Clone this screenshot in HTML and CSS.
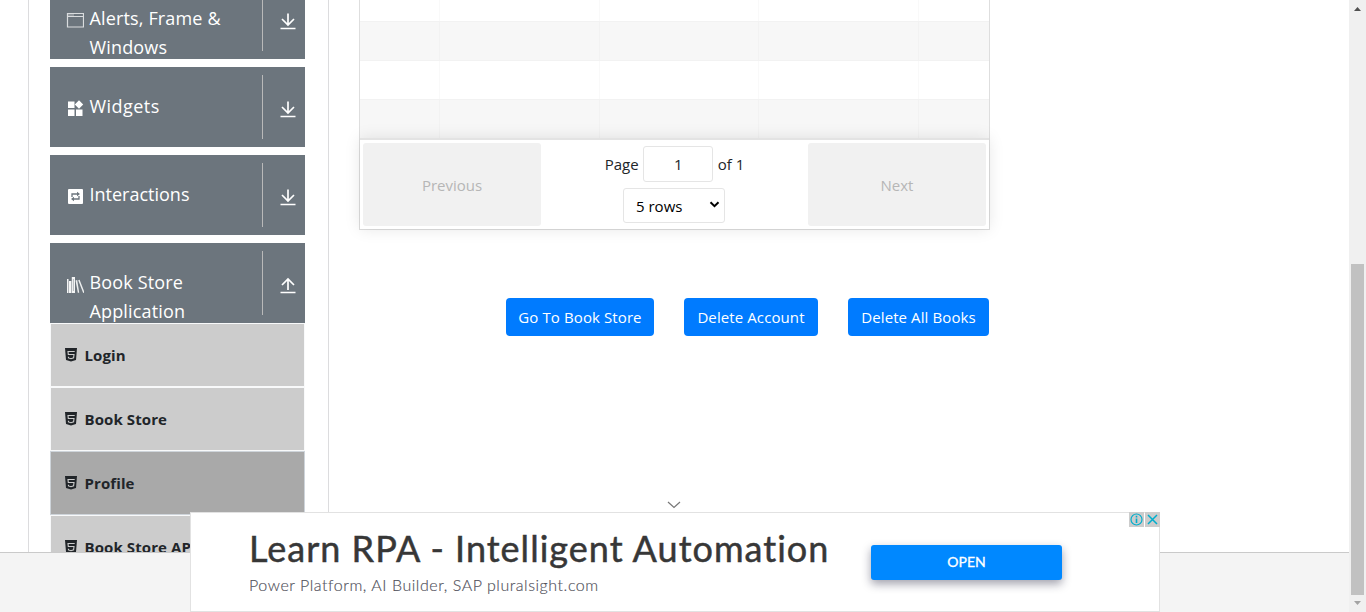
FILE: index.html
```html
<!DOCTYPE html>
<html lang="en">
<head>
<meta charset="utf-8">
<title>Profile</title>
<link rel="stylesheet" href="styles.css">
</head>
<body>
<svg class="defs" aria-hidden="true">
  <symbol id="down" viewBox="0 0 16 18"><path d="M8 1.500v11M2 7l6 6 6-6M.5 16.500h15" fill="none" stroke="#fff" stroke-width="1.700"/></symbol>
  <symbol id="up" viewBox="0 0 16 18"><path d="M8 14V3M2 9l6-6 6 6M.5 16.500h15" fill="none" stroke="#fff" stroke-width="1.700"/></symbol>
  <symbol id="html5" viewBox="0 0 12 14"><path d="M0 0h12l-1 12-5 1.500L1 12z" fill="#212529"/><path d="M9.700 3.500H3l.3 3h5.700l-.4 3.400-2.600.8-2.500-.8-.1-1.200" fill="none" stroke="#ccc" stroke-width="1.100"/></symbol>
</svg>
<div class="window">
  <div class="page">
    <main class="main">
      <aside class="sidebar">
        <div class="group">
          <svg class="group-icon" viewBox="0 0 18 18"><path d="M1.500 2.500h16v13.500h-16zM1.500 5.500h16" fill="none" stroke="#d9dcde" stroke-width="1.200"/><path d="M2.500 4h1m1 0h1m1 0h1" stroke="#fff"/></svg>
          <span class="group-name">Alerts, Frame &amp; Windows</span>
          <span class="toggle"><svg class="arrow"><use href="#down"/></svg></span>
        </div>
        <div class="group">
          <svg class="group-icon" viewBox="0 0 18 18"><path d="M2 2.500h6.500V9H2zM2 10.500h6.500V17H2zM10 10.500h6.500V17H10zM13 1.300l4.200 4.200L13 9.700 8.800 5.500z" fill="#fff"/></svg>
          <span class="group-name widgets">Widgets</span>
          <span class="toggle"><svg class="arrow"><use href="#down"/></svg></span>
        </div>
        <div class="group">
          <svg class="group-icon" viewBox="0 0 18 18"><rect x="2" y="2" width="15" height="15" rx="1" fill="#fff"/><path d="M6 10V7h6M13 9v3H7" fill="none" stroke="#6c757d" stroke-width="1.300"/><path d="M11 4.800l3 2.200-3 2.200zM8 9.800l-3 2.200 3 2.200z" fill="#6c757d"/></svg>
          <span class="group-name inter">Interactions</span>
          <span class="toggle"><svg class="arrow"><use href="#down"/></svg></span>
        </div>
        <div class="group">
          <svg class="group-icon" viewBox="0 0 18 18"><path d="M1 4h1.500v14H1zM3 6h2.300v12H3zM5.800 2H9v16H5.800z" fill="#f4f5f5"/><path d="M7.400 4v12" stroke="#9ba1a6" stroke-width=".7"/><path d="M9.500 5.500l1.700-.4 2 12.400-1.300.5zM12.200 5.300l1.400-.5 5 12.700-1.400.5z" fill="#eceeee"/></svg>
          <span class="group-name">Book Store Application</span>
          <span class="toggle"><svg class="arrow"><use href="#up"/></svg></span>
        </div>
        <ul class="menu">
          <li class="item"><svg class="item-icon"><use href="#html5"/></svg><span>Login</span></li>
          <li class="item"><svg class="item-icon"><use href="#html5"/></svg><span>Book Store</span></li>
          <li class="item active"><svg class="item-icon"><use href="#html5"/></svg><span>Profile</span></li>
          <li class="item"><svg class="item-icon"><use href="#html5"/></svg><span>Book Store API</span></li>
        </ul>
      </aside>
      <section class="content">
        <div class="table">
          <div class="row first"><i></i><i></i><i></i><i></i><i></i></div>
          <div class="row odd"><i></i><i></i><i></i><i></i><i></i></div>
          <div class="row even"><i></i><i></i><i></i><i></i><i></i></div>
          <div class="row last"><i></i><i></i><i></i><i></i><i></i></div>
          <div class="pagination">
            <div class="pager">Previous</div>
            <div class="pages">
              <div class="page-line"><span>Page</span><span class="page-number">1</span><span>of 1</span></div>
              <div class="select"><span>5 rows</span><svg class="caret" viewBox="0 0 10 7"><path d="M1 1.200l4 4 4-4" fill="none" stroke="#000" stroke-width="2"/></svg></div>
            </div>
            <div class="pager">Next</div>
          </div>
        </div>
        <div class="buttons">
          <div class="button b1">Go To Book Store</div>
          <div class="button b2">Delete Account</div>
          <div class="button b3">Delete All Books</div>
        </div>
      </section>
    </main>
    <footer class="footer"></footer>
  </div>
  <div class="scrollbar">
    <svg class="scroll-arrow" viewBox="0 0 7 4"><path d="M0 4l3.500-4L7 4z" fill="#505050"/></svg>
    <div class="thumb"></div>
    <svg class="scroll-arrow" viewBox="0 0 7 4"><path d="M0 0h7L3.500 4z" fill="#a3a3a3"/></svg>
  </div>
</div>
<svg class="collapse" viewBox="0 0 14 8"><path d="M1 1l6 5.500L13 1" fill="none" stroke="#777" stroke-width="1.200"/></svg>
<div class="ad">
  <div class="ad-text">
    <div class="ad-title">Learn RPA - Intelligent Automation</div>
    <div class="ad-sub">Power Platform, AI Builder, SAP pluralsight.com</div>
  </div>
  <div class="ad-open">OPEN</div>
  <div class="ad-badges">
    <svg class="badge" viewBox="0 0 15 15"><circle cx="7.500" cy="7.500" r="5.500" fill="none" stroke="#00aecd" stroke-width="1.200"/><path d="M7.500 6.500v4.500M7.500 3.800v1.600" stroke="#00aecd" stroke-width="1.600"/></svg>
    <svg class="badge" viewBox="0 0 15 15"><path d="M3 3l9 9M12 3l-9 9" stroke="#00aecd" stroke-width="1.500"/></svg>
  </div>
</div>
</body>
</html>
```
FILE: styles.css
```css
* { box-sizing: border-box; }
body { margin: 0; height: 612px; overflow: hidden; position: relative; background: #fff; color: #212529; font: 16px/24px "Open Sans", "Noto Sans", sans-serif; }
.defs { position: absolute; width: 0; height: 0; }
.window { display: flex; height: 612px; }
.page { width: 1349px; display: flex; flex-direction: column; }
.main { height: 552px; overflow: hidden; display: flex; padding-left: 28px; }
.footer { height: 60px; background: #f4f4f4; border-top: 1px solid #cacaca; }
.sidebar { width: 301px; height: 600px; flex: none; border: solid #dcdcde; border-width: 0 1px; padding: 0 23px 0 21px; margin-top: -21px; }
.group { height: 80px; margin-bottom: 8px; background: #6c757d; color: #fff; display: flex; overflow: hidden; }
.group:nth-child(4) { margin-bottom: 0; }
.group-icon { width: 18px; height: 18px; margin: 32px 0 0 16px; flex: none; }
.group-name { width: 145px; margin: 25px 0 0 5.500px; font-size: 18px; line-height: 29px; letter-spacing: .15px; }
.group-name.widgets { letter-spacing: .45px; }
.group-name.inter { letter-spacing: 0; }
.toggle { margin: 8px 0 0 auto; width: 43px; height: 64px; border-left: 1px solid #b9b9b9; display: flex; }
.arrow { width: 16px; height: 18px; margin: 25px 0 0 16.500px; }
.menu { list-style: none; margin: 0; padding: 0; }
.item { height: 64px; background: #ccc; border: 1px solid #f8f9fa; display: flex; align-items: center; font-weight: 700; font-size: 15px; letter-spacing: .1px; padding-left: 14px; gap: 7.500px; white-space: nowrap; }
.item.active { background: #a9a9a9; border-color: #ced4da; }
.item-icon { width: 12px; height: 14px; }
.content { width: 661px; padding-left: 30px; }
.table { width: 631px; border: 1px solid #dedede; border-top: 0; }
.row { display: flex; border-top: 1px solid #f2f2f2; height: 39px; }
.row i { width: 160px; border-right: 1px solid #f9f9f9; }
.row i:first-child { width: 80px; }
.row i:nth-child(3) { width: 159px; }
.row i:last-child { flex: 1; border: 0; }
.row.first { height: 21px; border: 0; }
.row.odd, .row.last { background: #f7f7f7; }
.row.odd i, .row.last i { border-color: #f2f2f2; }
.pagination { position: relative; height: 91px; background: #fff; border-top: 2px solid #e3e3e3; box-shadow: 0 0 15px rgba(0,0,0,.1); padding: 3px; display: flex; }
.pager { width: 178px; height: 83px; border-radius: 3px; background: #f1f1f1; color: #b6b6b6; display: flex; align-items: center; justify-content: center; font-size: 15px; }
.pages { flex: 1; display: flex; flex-direction: column; align-items: center; padding-top: 3px; gap: 6px; font-size: 15px; }
.page-line { display: flex; align-items: center; gap: 4.500px; }
.page-number { width: 70px; height: 36px; line-height: 34px; border: 1px solid #e5e5e5; border-radius: 3px; text-align: center; }
.select { width: 102px; height: 35px; margin-right: 1px; border: 1px solid #e5e5e5; border-radius: 3px; display: flex; align-items: center; justify-content: space-between; color: #000; padding: 1px 4px 0 12px; }
.caret { width: 11px; height: 7px; margin-top: -3px; }
.buttons { display: flex; gap: 30px; margin: 68px 0 0 147px; }
.button { height: 38px; border-radius: 4px; background: #007bff; color: #fff; text-align: center; line-height: 38px; font-size: 15px; letter-spacing: .1px; white-space: nowrap; }
.b1 { width: 148px; }
.b2 { width: 134px; }
.b3 { width: 141px; }
.scrollbar { width: 17px; background: #f0f0f0; display: flex; flex-direction: column; align-items: center; padding: 7px 0; }
.scroll-arrow { width: 7px; height: 4px; }
.thumb { width: 13px; height: 331px; background: #c1c1c1; margin: 253px 0 6px; }
.collapse { position: absolute; left: 666.500px; top: 501px; width: 14px; height: 8px; }
.ad { position: absolute; left: 190px; top: 512px; width: 970px; height: 100px; background: #fff; border: 1px solid #e2e2e2; display: flex; }
.ad-text { width: 680px; padding: 14px 0 0 58px; white-space: nowrap; }
.ad-title { font: 36px/42px Lato, sans-serif; color: #373737; letter-spacing: 1.020px; -webkit-text-stroke: .5px #373737; }
.ad-sub { font: 300 16px/20px Lato, sans-serif; color: #50505a; margin-top: 6px; letter-spacing: .55px; -webkit-text-stroke: .15px #50505a; }
.ad-open { width: 191px; height: 35px; margin-top: 32px; border-radius: 3px; background: #08f; color: #fff; text-align: center; font: 14px/34px Lato, sans-serif; -webkit-text-stroke: .3px #fff; box-shadow: 0 4px 10px rgba(20,20,50,.4); }
.ad-badges { position: absolute; right: -1px; top: -1px; display: flex; gap: 1px; }
.badge { width: 15px; height: 15px; background: #ccc; }
```
